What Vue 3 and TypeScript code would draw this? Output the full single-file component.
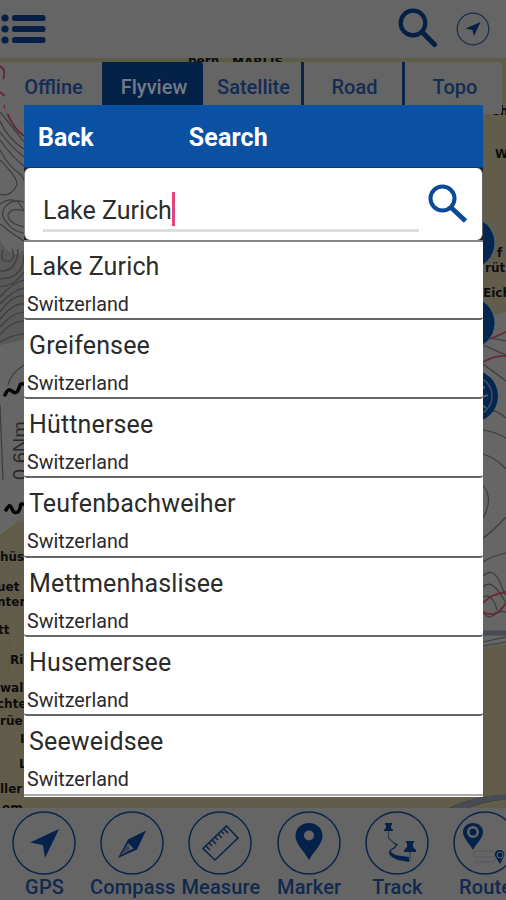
<script setup lang="ts">
interface Place {
  name: string
  country: string
}

interface MapLabel {
  text: string
  x: number
  y: number
  size?: number
}

const tabs: string[] = ['Offline', 'Flyview', 'Satellite', 'Road', 'Topo']
const activeTab = 'Flyview'
const query = 'Lake Zurich'

const places: Place[] = [
  'Lake Zurich',
  'Greifensee',
  'Hüttnersee',
  'Teufenbachweiher',
  'Mettmenhaslisee',
  'Husemersee',
  'Seeweidsee',
].map((name) => ({ name, country: 'Switzerland' }))

const tools: string[] = ['GPS', 'Compass', 'Measure', 'Marker', 'Track', 'Route']

const mapLabels: MapLabel[] = [
  { text: 'hüs', x: 0, y: 561 },
  { text: 'uet', x: -3, y: 591 },
  { text: 'nter', x: -3, y: 606 },
  { text: 'tt', x: -2, y: 634 },
  { text: 'Ri', x: 10, y: 664 },
  { text: 'wal', x: 0, y: 692 },
  { text: 'chte', x: -3, y: 708 },
  { text: 'rüe', x: 0, y: 725 },
  { text: 'I', x: 20, y: 743 },
  { text: 'L', x: 19, y: 768 },
  { text: 'ller', x: 0, y: 793 },
  { text: 'om', x: 2, y: 812 },
  { text: 'bern', x: 188, y: 65, size: 12 },
  { text: 'MÄRLIS', x: 232, y: 66, size: 12 },
  { text: 'Ch', x: 491, y: 115 },
  { text: 'Wa', x: 495, y: 158 },
  { text: 'f', x: 497, y: 257 },
  { text: 'rüt', x: 485, y: 272 },
  { text: 'Eich', x: 483, y: 297 },
]
</script>

<template>
  <main class="screen">
    <svg class="map" viewBox="0 0 506 900" aria-hidden="true">
      <rect width="506" height="900" fill="#666" />
      <path d="M0 535Q12 525 24 520V900H0ZM480 58H506V312L480 318ZM480 648L506 644V900H0V796H480Z" fill="#625d4b" />
      <path d="M0 60H506" stroke="#5d5d45" stroke-width="5" />
      <path d="M0 240Q12 262 24 250V340L0 345Z" fill="#595959" />
      <path d="M0 66Q7 70 3 79M4 105Q12 128 24 136M0 92L5 96" stroke="#642735" stroke-width="2" fill="none" />
      <g fill="none" stroke="#3c3c3c" stroke-width="1.200">
        <path d="M0 112Q10 124 24 142M0 121Q8 139 24 149M0 132Q11 147 24 157M0 140Q12 157 24 166M0 150Q8 166 20 174Q24 178 24 181M0 160Q18 178 17 185Q10 198 0 194M0 204Q16 193 24 211M24 202Q12 198 5 207Q-1 215 8 224Q14 232 24 233M24 211Q11 207 8 215Q8 223 24 227M0 224Q12 234 24 241" />
        <path d="M3 250Q-2 263 10 261Q16 258 12 249M0 271Q17 272 18 249M0 279Q24 278 24 255M0 287Q16 285 24 272M0 297Q12 283 24 280M0 304Q13 290 24 288M0 312Q13 294 24 296M0 319Q14 302 24 304M0 327Q13 312 24 312M0 335Q11 321 24 321M0 342Q14 334 24 334M8 385Q10 374 24 365M0 405L3 480" />
        <path d="M483 430Q496 432 506 438M483 454Q496 458 506 469M483 485Q494 499 483 518M483 538Q492 532 506 517M483 562Q490 557 506 553M483 576Q492 567 499 580Q503 591 506 595M483 587Q492 577 506 603M483 597Q492 592 497 610M483 611Q487 620 494 615T506 612M483 642L506 637M483 646L506 642M450 808Q475 796 506 795M462 810Q482 801 506 799M483 345L506 355M483 364L506 381M483 410Q494 408 506 418M490 338L506 341" />
      </g>
      <g fill="none" stroke-linecap="round">
        <path d="M483 603Q491 594 506 592M483 612Q496 619 506 603M483 362Q496 355 506 356M483 342L506 332" stroke="#6a2933" stroke-width="1.800" />
        <path d="M0 537Q12 528 20 520M8 674Q13 640 6 622M0 711L24 695" stroke="#596025" />
        <path d="M483 633H506M452 811Q476 798 506 797" stroke="#474b56" stroke-width="5" />
        <path d="M5 395C10 383 12 396 17 392C22 385 17 382 27 385M6 510C13 498 10 516 18 512C23 507 17 500 27 506" stroke="#050505" stroke-width="3.500" />
      </g>
      <circle cx="469" cy="243" r="26" fill="#04264f" stroke="#53657a" />
      <circle cx="469" cy="323" r="26" fill="#04264f" stroke="#53657a" />
      <circle cx="472" cy="396" r="26" fill="#04264f" />
      <circle cx="472" cy="396" r="20" fill="none" stroke="#3d5069" stroke-width="1.500" />
      <path d="M481 386L485 388M482 397L488 395M482 405L486 408" stroke="#4d5d70" stroke-width="2" />
      <text class="map-scale" transform="translate(27 480) rotate(-90)">0.6Nm</text>
      <text
        v-for="label in mapLabels"
        :key="label.text + label.y"
        class="map-label"
        :x="label.x"
        :y="label.y"
        :font-size="label.size ?? 12"
      >{{ label.text }}</text>
    </svg>

    <header class="top-bar">
      <svg class="menu-icon" viewBox="0 0 46 30" aria-hidden="true">
        <g fill="#051f45">
          <circle cx="5" cy="4" r="3.600" /><circle cx="5" cy="15" r="3.600" /><circle cx="5" cy="26" r="3.600" />
          <rect x="12" y="1" width="33.500" height="6" rx="2.500" />
          <rect x="12" y="12" width="33.500" height="6" rx="2.500" />
          <rect x="12" y="23" width="33.500" height="6" rx="2.500" />
        </g>
      </svg>
      <span class="top-actions">
        <svg class="top-search" viewBox="0 0 40 40" aria-hidden="true">
          <circle cx="15" cy="15" r="12.300" fill="none" stroke="#051f45" stroke-width="4.200" />
          <path d="M24 24L36.500 36.500" stroke="#051f45" stroke-width="5" stroke-linecap="round" />
        </svg>
        <svg class="top-locate" viewBox="0 0 34 34" aria-hidden="true">
          <circle cx="17" cy="17" r="15.800" fill="none" stroke="#172b4b" stroke-width="1.200" />
          <path d="M24.500 10L9.500 16.500L16.500 18L18 24Z" fill="#051f45" />
        </svg>
      </span>
    </header>

    <nav class="tabs">
      <span v-for="tab in tabs" :key="tab" class="tab" :class="{ active: tab === activeTab }">{{ tab }}</span>
    </nav>

    <footer class="toolbar">
      <div v-for="tool in tools" :key="tool" class="tool">
        <svg class="tool-icon" viewBox="0 0 64 64" aria-hidden="true">
          <circle cx="32" cy="32" r="31" fill="none" stroke="#0b2549" stroke-width="1.500" />
          <path v-if="tool === 'GPS'" d="M47 18L18 31.500L31 34L33 47Z" fill="#05224a" />
          <g v-else-if="tool === 'Compass'">
            <path d="M46 19.500L28 28.500L18 47L37 38.500Z" fill="#05224a" />
            <path d="M28 32L33.500 37.500L21 44Z" fill="#666" />
            <path d="M28 32L30 39L21 44Z" fill="#394757" />
          </g>
          <g v-else-if="tool === 'Measure'" fill="none" stroke="#0b2549" stroke-width="1.600">
            <path d="M38.500 15L50 27L27 49L15 37.500Z" />
            <path d="M18 35L22 39M21 32L24 35M24 29L28 33M27 26L30 29M30 23L34 27M33 20L36 23M36 18L40 22" />
          </g>
          <path v-else-if="tool === 'Marker'" fill="#05224a" fill-rule="evenodd" d="M32 12C24 12 18.500 17.500 18.500 25C18.500 33 27 40 32 49C37 40 45.500 33 45.500 25C45.500 17.500 40 12 32 12ZM32 19.500A5 5 0 1 1 32 29.500A5 5 0 1 1 32 19.500Z" />
          <g v-else-if="tool === 'Track'">
            <path d="M20 12H27V14H26V17L28 19V20H19V19L21 17V14H20ZM41 30H49V32H48V36L51 39V41H39V39L42 36V32H41Z" fill="#05224a" />
            <path d="M23.500 20V27L30 33M45 41V50" fill="none" stroke="#303d50" stroke-width="1.200" />
            <path d="M28 31L33 33.500L30 37L25.500 40Q27 43 33 44.500L44 46V51L33 49Q23 45 24 41Q24 39 28 37L31 34Z" fill="#05224a" />
          </g>
          <g v-else>
            <path fill="#05224a" fill-rule="evenodd" d="M20 12C14 12 10 16 10 21C10 27 17 33 20 39C23 33 30 27 30 21C30 16 26 12 20 12ZM20 15A6 6 0 1 1 20 27A6 6 0 1 1 20 15Z" />
            <circle cx="20" cy="21" r="3.500" fill="#05224a" />
            <path d="M41 40H22Q18 44 23 46H40Q45 50 39 51H22" fill="none" stroke="#53565c" />
            <path d="M47 39C43 39 41 42 42 45L47 53L51 45C52 42 50 39 47 39Z" fill="#05224a" />
            <circle cx="47" cy="44" r="3" fill="none" stroke="#666" />
          </g>
        </svg>
        <span class="tool-label">{{ tool }}</span>
      </div>
    </footer>

    <section class="dialog">
      <header class="dialog-header">
        <span class="back">Back</span>
        <h1 class="title">Search</h1>
      </header>
      <div class="search-wrap">
        <div class="search-box">
          <div class="field"><span>{{ query }}</span><i class="caret"></i></div>
          <svg class="search-icon" viewBox="0 0 40 40" aria-hidden="true">
            <circle cx="14.500" cy="14.500" r="12" fill="none" stroke="#0a4a99" stroke-width="4" />
            <path d="M22.500 23L37.500 37" stroke="#0a4a99" stroke-width="4.800" />
          </svg>
        </div>
      </div>
      <ul class="results">
        <li v-for="place in places" :key="place.name" class="result">
          <span class="name">{{ place.name }}</span>
          <span class="country">{{ place.country }}</span>
        </li>
      </ul>
    </section>
  </main>
</template>

<style>
body {
  margin: 0;
}
</style>

<style scoped>
.screen {
  position: relative;
  display: flex;
  flex-direction: column;
  width: 506px;
  height: 900px;
  overflow: hidden;
  background: #666;
  font-family: Roboto, "Liberation Sans", sans-serif;
}

.map {
  position: absolute;
  inset: 0;
  width: 506px;
  height: 900px;
}

.map-label {
  font-family: "DejaVu Sans", sans-serif;
  font-weight: 700;
  fill: #0c0c0c;
}

.map-scale {
  font-family: "Liberation Sans", sans-serif;
  font-size: 20px;
  fill: #292929;
}

.top-bar,
.tabs,
.toolbar {
  position: relative;
  box-sizing: border-box;
  flex: none;
}

.top-bar {
  display: flex;
  justify-content: space-between;
  height: 58px;
  padding: 8px 16px 0 0;
  background: #656565;
}

.menu-icon {
  width: 46px;
  height: 30px;
  margin-top: 6px;
}

.top-actions {
  display: flex;
  gap: 18px;
}

.top-search {
  width: 40px;
  height: 40px;
}

.top-locate {
  width: 34px;
  height: 34px;
  margin-top: 4px;
}

.tabs {
  display: grid;
  grid-template-columns: 97px 101px 101px 101px 98px;
  height: 52px;
  margin: 4px 4px 0 5px;
  overflow: hidden;
  border-radius: 3px;
  background: #656565;
}

.tab {
  box-sizing: border-box;
  padding: 12px 0 0 3px;
  border-right: 3px solid #0b2549;
  color: #132c54;
  font-size: 20px;
  font-weight: 500;
  line-height: 27px;
  text-align: center;
}

.tab:first-child {
  padding-left: 0;
  border-right: 0;
}

.tab:last-child {
  border-right-width: 1px;
}

.tab.active {
  border-right: 0;
  border-top-right-radius: 3px;
  background: #042148;
  color: #737b86;
}

.toolbar {
  display: grid;
  grid-template-columns: repeat(6, 88.200px);
  height: 92px;
  margin-top: auto;
  padding-top: 3px;
  background: #656565;
}

.tool {
  display: flex;
  flex-direction: column;
  align-items: center;
}

.tool-icon {
  width: 64px;
  height: 64px;
}

.tool-label {
  padding-left: 1px;
  color: #10294f;
  font-size: 20px;
  font-weight: 500;
  letter-spacing: 0.150px;
  line-height: 24px;
}

.dialog {
  position: absolute;
  top: 105px;
  left: 24px;
  width: 459px;
  height: 692px;
  background: #fff;
}

.dialog-header {
  display: flex;
  align-items: center;
  gap: 95px;
  box-sizing: border-box;
  height: 63px;
  padding: 3px 14px 0;
  border-bottom: 1px solid #0b3970;
  background: #0b51a3;
  color: #fff;
  font-size: 25px;
  font-weight: 700;
}

.title {
  margin: 0;
  font-size: inherit;
  font-weight: inherit;
  letter-spacing: 0.150px;
}

.search-wrap {
  background: #222;
}

.search-box {
  display: flex;
  justify-content: space-between;
  box-sizing: border-box;
  height: 72px;
  padding: 16px 15px 0 19px;
  border-right: 1px solid #666;
  border-left: 1px solid #888;
  border-radius: 6px;
  background: #fff;
}

.field {
  display: flex;
  align-items: center;
  box-sizing: border-box;
  width: 376px;
  height: 48px;
  margin-left: -1px;
  padding-top: 8px;
  border-bottom: 3px solid #dedede;
  color: #2c2c2c;
  font-size: 25px;
}

.caret {
  width: 3px;
  height: 34px;
  margin-top: -3px;
  background: #e0457f;
}

.search-icon {
  width: 40px;
  height: 40px;
  margin-right: -1px;
}

.results {
  margin: 0;
  padding: 0;
  border-top: 2px solid #858585;
  border-bottom: 2px solid #aaa;
  list-style: none;
}

.result {
  display: flex;
  flex-direction: column;
  box-sizing: border-box;
  height: 79.200px;
  padding: 11px 3px 0;
  border-bottom: 2px solid #666;
  border-radius: 0 0 3px 3px;
  background: #fff;
  color: #2b2b2b;
}

.result:first-child {
  height: 78px;
  padding-top: 10px;
}

.result:last-child {
  height: 77.800px;
  border-bottom: 0;
}

.name {
  padding-left: 2px;
  font-size: 25px;
  letter-spacing: 0.150px;
  line-height: 30px;
}

.country {
  margin-top: 11px;
  font-size: 19.700px;
  line-height: 24px;
}
</style>
